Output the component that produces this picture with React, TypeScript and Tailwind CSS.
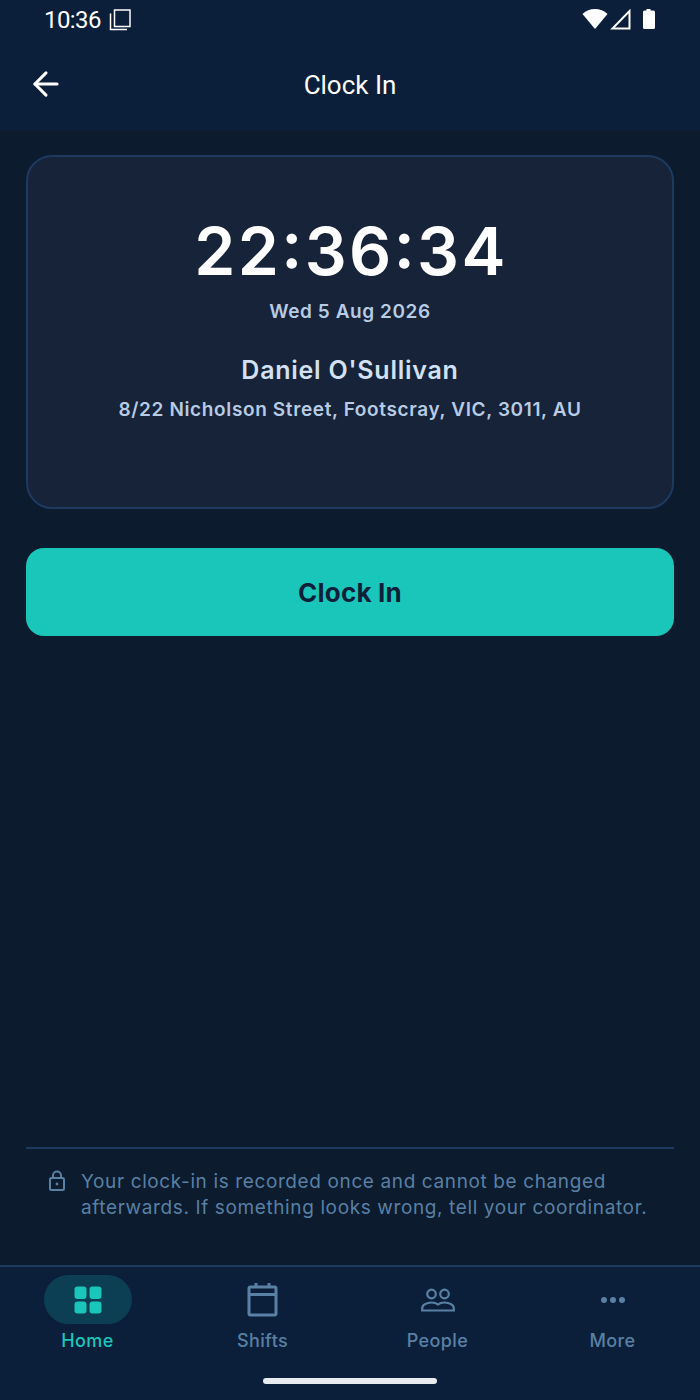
import { ArrowLeft } from 'lucide-react'

const inter = "font-['Inter',sans-serif]"

function StatusBar() {
  return (
    <div className="flex h-[40px] items-center justify-between px-[44px] text-white">
      <div className="flex items-center gap-[8px]">
        <span className="font-['Roboto',sans-serif] text-[24px] leading-[38px] tracking-[-0.6px]">10:36</span>
        <svg width="22" height="22" viewBox="0 0 22 22" fill="none" stroke="#fff" strokeWidth="1.5">
          <rect x="5.5" y="1" width="15.5" height="16.5" />
          <path d="M1.5 4.5V20.5H18" />
        </svg>
      </div>
      <div className="flex items-center">
        <svg width="26" height="22" viewBox="0 0 26 22" fill="#fff">
          <path d="M13 20 0.5 5C4 1.5 8 0 13 0S22 1.5 25.5 5Z" />
        </svg>
        <svg className="ml-[2px]" width="21" height="22" viewBox="0 0 21 22" fill="none" stroke="#fff" strokeWidth="2">
          <path d="M19.5 2V19.5H2.5Z" />
        </svg>
        <svg className="ml-[11px]" width="14" height="22" viewBox="0 1 14 22" fill="#fff">
          <path d="M4.5 0.5H8.5V2.5H11.5Q13 2.5 13 4V19.5Q13 21 11.5 21H2.5Q1 21 1 19.5V4Q1 2.5 2.5 2.5H4.5Z" />
        </svg>
      </div>
    </div>
  )
}

function Header() {
  return (
    <div className="relative flex h-[90px] items-center justify-center">
      <ArrowLeft className="absolute left-[27px] top-[25px] text-white" size={38} strokeWidth={3} absoluteStrokeWidth />
      <span className="font-['Roboto',sans-serif] text-[26px] leading-[30px] text-white">Clock In</span>
    </div>
  )
}

function HomeIcon() {
  return (
    <svg width="28" height="28" viewBox="0 0 28 28" fill="#19c6b9">
      <rect x="0.5" y="0.5" width="12" height="12.5" rx="3" />
      <rect x="15.5" y="0.5" width="12" height="12.5" rx="3" />
      <rect x="0.5" y="15.5" width="12" height="12" rx="3" />
      <rect x="15.5" y="15.5" width="12" height="12" rx="3" />
    </svg>
  )
}

function ShiftsIcon() {
  return (
    <svg width="32" height="36" viewBox="0 0 32 36" fill="none" stroke="#5a80a3" strokeWidth="3" strokeLinejoin="round">
      <rect x="2" y="5" width="27" height="28" rx="1.5" />
      <path d="M2 12.5H29M9 1V5M22 1V5" />
    </svg>
  )
}

function PeopleIcon() {
  return (
    <svg width="34" height="24" viewBox="0 0 34 24" fill="none" stroke="#5a80a3" strokeWidth="2.2">
      <circle cx="10.5" cy="6" r="4.3" />
      <circle cx="23.5" cy="6" r="4.3" />
      <path d="M1.2 22.5H32.8V20.5C32.8 17 28.5 14.5 23.5 14.5C21 14.5 18.5 15.2 17 16.5C15.5 15.2 13 14.5 10.5 14.5C5.5 14.5 1.2 17 1.2 20.5Z" />
    </svg>
  )
}

function MoreIcon() {
  return (
    <svg width="24" height="8" viewBox="0 0 24 8" fill="#5a80a3">
      <circle cx="3" cy="4" r="3" />
      <circle cx="12" cy="4" r="3" />
      <circle cx="21" cy="4" r="3" />
    </svg>
  )
}

function NavItem({ label, active, icon }: { label: string; active?: boolean; icon: React.ReactNode }) {
  return (
    <div className="flex flex-1 flex-col items-center">
      <div className={`flex h-[49px] w-[88px] items-center justify-center rounded-full ${active ? 'bg-[#0d3f54]' : ''}`}>
        {icon}
      </div>
      <span className={`mt-[5px] text-[18px] font-medium leading-[24px] tracking-[0.4px] ${active ? 'text-[#19c6b9]' : 'text-[#5a80a3]'}`}>
        {label}
      </span>
    </div>
  )
}

export default function App() {
  return (
    <div className={`flex h-[1400px] w-[700px] flex-col bg-[#0c1b2e] ${inter}`}>
      <div className="h-[130px] bg-[#0b1f3b]">
        <StatusBar />
        <Header />
      </div>

      <main className="flex flex-1 flex-col px-[26px] pt-[25px]">
        <div className="flex h-[354px] flex-col items-center rounded-[26px] border-2 border-[#1e3a5f] bg-[#162338] pt-[56px]">
          <div className="ml-[2px] text-[66px] font-semibold leading-[76px] tracking-[2.4px] text-white [font-feature-settings:'calt','case']">22:36:34</div>
          <div className="mt-[9px] text-[19px] font-semibold leading-[28px] tracking-[0.57px] text-[#b8cbe4]">Wed 5 Aug 2026</div>
          <div className="mt-[27px] text-[25px] font-semibold leading-[34px] tracking-[0.75px] text-[#d3e1f4]">Daniel O'Sullivan</div>
          <div className="mt-[9px] text-[19px] font-semibold leading-[28px] tracking-[0.63px] text-[#b8cbe4]">8/22 Nicholson Street, Footscray, VIC, 3011, AU</div>
        </div>

        <button className="mt-[39px] flex h-[88px] items-center justify-center rounded-[18px] bg-[#19c6b9] text-[26px] font-bold tracking-[0.2px] text-[#0c1f38]">
          Clock In
        </button>

        <div className="mt-auto h-[118px] border-t-2 border-[#1e3a5f] pt-[20px]">
          <div className="flex">
            <svg className="ml-[22px] mt-[1px]" width="18" height="22" viewBox="0 0 18 22" fill="none" stroke="#5a80a3" strokeWidth="2">
              <rect x="2" y="8" width="14" height="12" rx="1.5" />
              <path d="M5 8V5.5a4 4 0 0 1 8 0V8" />
              <circle cx="9" cy="14" r="1.4" fill="#5a80a3" stroke="none" />
            </svg>
            <p className="ml-[15px] text-[19px] leading-[26px] tracking-[0.62px] text-[#5a80a3]">
              Your clock-in is recorded once and cannot be changed
              <br />
              afterwards. If something looks wrong, tell your coordinator.
            </p>
          </div>
        </div>
      </main>

      <nav className="relative h-[135px] border-t-2 border-[#1e3a5f] bg-[#0b1f3b] pt-[8px]">
        <div className="flex">
          <NavItem label="Home" active icon={<HomeIcon />} />
          <NavItem label="Shifts" icon={<ShiftsIcon />} />
          <NavItem label="People" icon={<PeopleIcon />} />
          <NavItem label="More" icon={<MoreIcon />} />
        </div>
        <div className="absolute bottom-[16px] left-[263px] h-[6px] w-[174px] rounded-full bg-[#e9ecef]" />
      </nav>
    </div>
  )
}
